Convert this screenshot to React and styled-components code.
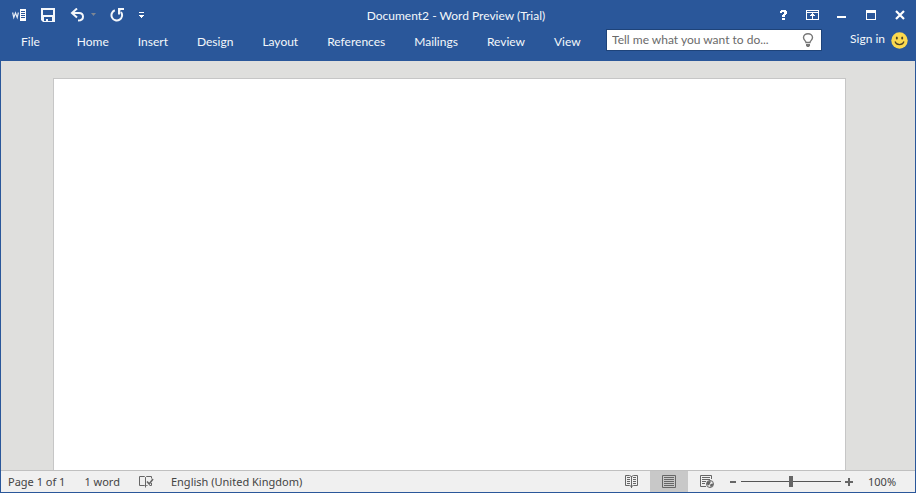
import React from "react";
import styled, { createGlobalStyle } from "styled-components";

const Global = createGlobalStyle`
  * { box-sizing: border-box; }
  body { margin: 0; }
  button, input { font: inherit; color: inherit; }
`;

const Window = styled.div`
  display: flex;
  flex-direction: column;
  height: 100vh;
  border: 1px solid #2a579a;
  font-family: Lato, "Noto Sans", sans-serif;
  font-size: 12px;
  line-height: 16px;
  overflow: hidden;
`;

const Header = styled.header`
  flex: none;
  background: #2a579a;
  color: #f4f7fb;
`;

const TitleBar = styled.div`
  display: grid;
  grid-template-columns: 1fr auto 1fr;
  align-items: center;
  height: 28px;
`;

const Title = styled.h1`
  margin: 0;
  padding: 2px 4px 0 0;
  font-size: 12px;
  font-weight: 400;
  white-space: nowrap;
`;

const ButtonGroup = styled.div`
  display: flex;
  justify-content: ${(p) => (p.$end ? "flex-end" : "flex-start")};
  padding: ${(p) => (p.$end ? "0 1px 0 0" : "0 0 0 4px")};
`;

const IconButton = styled.button`
  display: flex;
  align-items: center;
  justify-content: center;
  flex: none;
  width: ${(p) => p.$width || 29}px;
  height: 28px;
  padding: 0;
  border: 0;
  background: ${(p) => (p.$active ? "#c8c8c8" : "transparent")};
`;

const Icon = styled.svg`
  display: block;
  flex: none;
`;

const Ribbon = styled.div`
  display: flex;
  align-items: flex-start;
  height: 32px;
  padding-right: 7px;
`;

const Tabs = styled.nav`
  display: flex;
  padding-left: 6px;
  gap: 1px;
`;

const Tab = styled.button`
  height: 26px;
  margin-right: ${(p) => (p.$file ? 8 : 0)}px;
  padding: 0 14px;
  border: 0;
  background: transparent;
  white-space: nowrap;
`;

const Search = styled.label`
  display: flex;
  flex: none;
  align-items: center;
  width: 216px;
  height: 22px;
  margin-left: auto;
  padding: 0 7px 0 5px;
  border: 1px solid #1e4379;
  background: #fff;
`;

const SearchInput = styled.input`
  flex: 1;
  min-width: 0;
  padding: 0;
  border: 0;
  outline: 0;
  background: transparent;
  color: #444;
  &::placeholder { color: #6a6a6a; opacity: 1; }
`;

const SignIn = styled.a`
  margin-left: 28px;
  line-height: 20px;
  color: inherit;
  text-decoration: none;
  white-space: nowrap;
`;

const Feedback = styled.button`
  margin: 3px 0 0 6px;
  padding: 0;
  border: 0;
  background: transparent;
`;

const Canvas = styled.main`
  display: flex;
  flex: 1;
  min-height: 0;
  padding: 17px 69px 0 52px;
  background: #dfdfdd;
`;

const Paper = styled.article`
  flex: 1;
  border: 1px solid #c6c6c6;
  border-bottom: 0;
  background: #fff;
`;

const StatusBar = styled.footer`
  display: flex;
  flex: none;
  align-items: center;
  height: 22px;
  padding: 0 19px 0 7px;
  border-top: 1px solid #c0c0c0;
  background: #f0f0f0;
  color: #444;
  font-family: "Noto Sans", sans-serif;
  font-size: 11px;
`;

const StatusItem = styled.button`
  margin-right: ${(p) => p.$gap || 19}px;
  padding: 0;
  border: 0;
  background: transparent;
  white-space: nowrap;
`;

const ViewControls = styled.div`
  display: flex;
  align-items: center;
  align-self: stretch;
  margin-left: auto;
`;

const ViewButton = styled(IconButton)`
  width: 38px;
  height: 100%;
`;

const ZoomSlider = styled.input`
  appearance: none;
  width: 100px;
  height: 12px;
  margin: 0 4px;
  background: linear-gradient(#555, #555) center / 100% 1px no-repeat;
  &::-webkit-slider-thumb {
    appearance: none;
    width: 4px;
    height: 11px;
    background: #666;
  }
`;

const ZoomControls = styled.div`
  display: flex;
  align-items: center;
  padding: 0 15px 0 3px;
`;

const ZoomButton = styled(IconButton)`
  width: 8px;
  height: 20px;
`;

const ZoomValue = styled.button`
  width: 28px;
  padding: 0;
  border: 0;
  background: transparent;
  text-align: left;
`;

const tabs = ["Home", "Insert", "Design", "Layout", "References", "Mailings", "Review", "View"];

const WordIcon = () => (
  <Icon width="14" height="12" viewBox="0 0 14 12">
    <path d="M.6 3.500l1.200 5L3.500 4l1.700 4.500 1.200-5" fill="none" stroke="#e6ecf5" strokeWidth="1.200" />
    <path d="M8 0h6v12H8z" fill="#fff" />
    <path d="M9 2.500h4M9 4.500h4M9 6.500h4M9 8.500h4" stroke="#2a579a" />
  </Icon>
);

const SaveIcon = () => (
  <Icon width="14" height="14" viewBox="0 0 14 14">
    <path fill="#f4f7fb" fillRule="evenodd" d="M0 0h14v14H2l-2-2zM2 2v5h10V2zM3 9v4h2v-2h2v2h4V9z" />
  </Icon>
);

const UndoIcon = () => (
  <Icon width="26" height="14" viewBox="0 0 26 14">
    <path d="M7 .5L2 5l5 4.500M2.500 5H9c2.700 0 4 1.500 4 3.700S11.700 12.500 8 12.500" fill="none" stroke="#f4f7fb" strokeWidth="2" />
    <path d="M21 5h5l-2.500 3z" fill="#7d8694" />
  </Icon>
);

const RedoIcon = () => (
  <Icon width="14" height="14" viewBox="0 0 14 14">
    <path d="M4.800 2.300A5.300 5.300 0 1 0 11 4" fill="none" stroke="#f4f7fb" strokeWidth="2" />
    <path d="M8 0h6v2h-3.500L10 6.500H8z" fill="#f4f7fb" />
  </Icon>
);

const CustomizeIcon = () => (
  <Icon width="5" height="6" viewBox="0 0 5 6">
    <path d="M0 0h5v1H0zM0 3h5v1H4v1H3v1H2V5H1V4H0z" fill="#fff" />
  </Icon>
);

const HelpIcon = () => (
  <Icon width="7" height="10" viewBox="0 0 7 10" shapeRendering="crispEdges">
    <path d="M1 0h5v1h1v3H6v1H5v2H2V5h1V4h1V2H2v1H0V1h1zM2 8h3v2H2z" fill="#fff" />
  </Icon>
);

const RibbonOptionsIcon = () => (
  <Icon width="13" height="10" viewBox="0 0 13 10" shapeRendering="crispEdges">
    <path d="M.5.5h12v9H.5zM1 2.500h11" fill="none" stroke="#fff" />
    <path d="M6 3h1v1h1v1h1v1H7v3H6V6H4V5h1V4h1z" fill="#fff" />
  </Icon>
);

const MinimizeIcon = () => (
  <Icon width="9" height="10" viewBox="0 0 9 10"><path d="M0 6h9v2H0z" fill="#fff" /></Icon>
);

const MaximizeIcon = () => (
  <Icon width="10" height="10" viewBox="0 0 10 10">
    <path fillRule="evenodd" d="M0 0h10v10H0zM1 3v6h8V3z" fill="#fff" />
  </Icon>
);

const CloseIcon = () => (
  <Icon width="10" height="10" viewBox="0 0 10 10">
    <path d="M1 1l8 8M9 1L1 9" stroke="#fff" strokeWidth="2.200" />
  </Icon>
);

const BulbIcon = () => (
  <Icon width="12" height="14" viewBox="0 0 12 14">
    <path d="M4 9.500C4 8 1.500 7 1.500 4.600 1.500 2.200 3.500.8 6 .8s4.500 1.400 4.500 3.800C10.500 7 8 8 8 9.500z" fill="none" stroke="#777" strokeWidth="1.400" />
    <path d="M4 11h4v1.500L7 14H5l-1-1.500z" fill="#777" />
  </Icon>
);

const SmileIcon = () => (
  <Icon width="17" height="17" viewBox="0 0 17 17">
    <circle cx="8.500" cy="8.500" r="8.200" fill="#fcd94e" />
    <ellipse cx="5.800" cy="6" rx="1" ry="1.500" fill="#4d4528" />
    <ellipse cx="11.200" cy="6" rx="1" ry="1.500" fill="#4d4528" />
    <path d="M4 9.500c1.500 4.200 7.500 4.200 9 0" fill="none" stroke="#4d4528" strokeWidth="1.200" />
  </Icon>
);

const ProofIcon = () => (
  <Icon width="15" height="14" viewBox="0 0 15 14">
    <path d="M6.500 12.500V2.500L5.500 1.500h-5v9h5l1 1 1-1h1M6.500 2.500l1-1h5v2M12.500 8v2.500h-2" fill="none" stroke="#666" />
    <path d="M8 6.500l2.200 2.500L14 4" fill="none" stroke="#666" strokeWidth="1.600" />
  </Icon>
);

const ReadIcon = () => (
  <Icon width="13" height="13" viewBox="0 0 13 13">
    <path d="M.5.5h4l2 1 2-1h4v10h-4l-2 1-2-1h-4zM6.500 1V13M2 2.500h3M2 4.500h3M2 6.500h3M2 8.500h3M8 2.500h3M8 4.500h3M8 6.500h3M8 8.500h3" fill="none" stroke="#666" />
  </Icon>
);

const PrintIcon = () => (
  <Icon width="14" height="13" viewBox="0 0 14 13">
    <path d="M.5.5h13v12H.5zM2 2.500h10M2 4.500h10M2 6.500h10M2 8.500h10M2 10.500h10" fill="none" stroke="#666" />
  </Icon>
);

const WebIcon = () => (
  <Icon width="14" height="13" viewBox="0 0 14 13">
    <path d="M11.500 4V.5H.5v11H6M2 2.500h8M2 4.500h8M2 6.500h4M2 8.500h3" fill="none" stroke="#666" />
    <circle cx="10" cy="9" r="3.500" fill="#f0f0f0" stroke="#666" />
    <path d="M7 7l2-1 2 .5-1 2-1 2-2-1zM10.500 9l2.500-.5v2l-2 1.500-1-1z" fill="#666" />
  </Icon>
);

const windowButtons = [
  ["Help", HelpIcon],
  ["Ribbon display options", RibbonOptionsIcon],
  ["Minimize", MinimizeIcon],
  ["Maximize", MaximizeIcon],
  ["Close", CloseIcon],
];

const quickButtons = [
  ["Word", WordIcon, 28],
  ["Save", SaveIcon, 30],
  ["Undo", UndoIcon, 39],
  ["Repeat", RedoIcon, 30],
  ["Customize toolbar", CustomizeIcon, 18],
];

export default function App() {
  return (
    <>
      <Global />
      <Window>
        <Header>
          <TitleBar>
            <ButtonGroup>
              {quickButtons.map(([label, Glyph, width]) => (
                <IconButton key={label} aria-label={label} $width={width}><Glyph /></IconButton>
              ))}
            </ButtonGroup>
            <Title>Document2 - Word Preview (Trial)</Title>
            <ButtonGroup $end>
              {windowButtons.map(([label, Glyph]) => (
                <IconButton key={label} aria-label={label}><Glyph /></IconButton>
              ))}
            </ButtonGroup>
          </TitleBar>
          <Ribbon>
            <Tabs>
              <Tab $file>File</Tab>
              {tabs.map((name) => <Tab key={name}>{name}</Tab>)}
            </Tabs>
            <Search>
              <SearchInput aria-label="Tell me what you want to do" placeholder="Tell me what you want to do..." />
              <BulbIcon />
            </Search>
            <SignIn href="#">Sign in</SignIn>
            <Feedback aria-label="Send a smile"><SmileIcon /></Feedback>
          </Ribbon>
        </Header>
        <Canvas>
          <Paper aria-label="Document page" />
        </Canvas>
        <StatusBar>
          <StatusItem>Page 1 of 1</StatusItem>
          <StatusItem>1 word</StatusItem>
          <StatusItem aria-label="Proofing" $gap={17}><ProofIcon /></StatusItem>
          <StatusItem>English (United Kingdom)</StatusItem>
          <ViewControls>
            <ViewButton aria-label="Read mode"><ReadIcon /></ViewButton>
            <ViewButton aria-label="Print layout" $active><PrintIcon /></ViewButton>
            <ViewButton aria-label="Web layout"><WebIcon /></ViewButton>
            <ZoomControls>
              <ZoomButton aria-label="Zoom out">
                <Icon width="6" height="8" viewBox="0 0 6 8"><path d="M0 3h6v2H0z" fill="#666" /></Icon>
              </ZoomButton>
              <ZoomSlider type="range" aria-label="Zoom" min="0" max="200" defaultValue="100" />
              <ZoomButton aria-label="Zoom in">
                <Icon width="8" height="8" viewBox="0 0 8 8"><path d="M0 3h3V0h2v3h3v2H5v3H3V5H0z" fill="#666" /></Icon>
              </ZoomButton>
            </ZoomControls>
            <ZoomValue>100%</ZoomValue>
          </ViewControls>
        </StatusBar>
      </Window>
    </>
  );
}
